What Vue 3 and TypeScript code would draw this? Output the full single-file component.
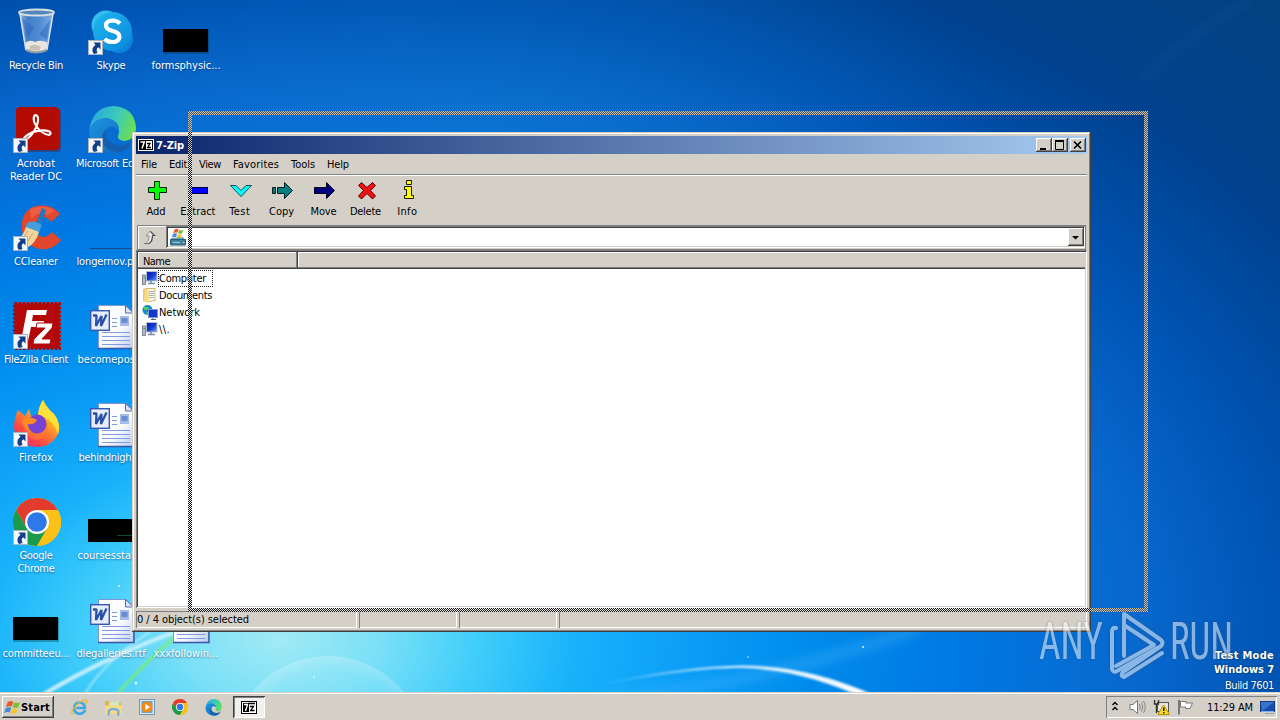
<script setup lang="ts">
import type { Directive } from 'vue'

interface DesktopItem {
  icon: string
  lines: { text: string; width: number }[]
  shortcut?: boolean
}

// Spreads a label's letters so that it fills the given width.
const vFit: Directive<HTMLElement, number> = {
  mounted(el, binding) {
    const count = (el.textContent ?? '').trim().length
    if (!count) return
    const natural = el.getBoundingClientRect().width
    el.style.letterSpacing = `${(binding.value - natural) / count}px`
  },
}

const one = (icon: string, text: string, width: number, shortcut = false): DesktopItem => ({
  icon,
  lines: [{ text, width }],
  shortcut,
})

const columns: DesktopItem[][] = [
  [
    one('bin', 'Recycle Bin', 54),
    { icon: 'acrobat', shortcut: true, lines: [{ text: 'Acrobat', width: 38 }, { text: 'Reader DC', width: 52 }] },
    one('ccleaner', 'CCleaner', 44, true),
    one('filezilla', 'FileZilla Client', 64, true),
    one('firefox', 'Firefox', 34, true),
    { icon: 'chrome', shortcut: true, lines: [{ text: 'Google', width: 33 }, { text: 'Chrome', width: 37 }] },
    one('black', 'committeeu...', 67),
  ],
  [
    one('skype', 'Skype', 29, true),
    one('edge', 'Microsoft Edge', 70, true),
    one('line', 'longernov.png', 69),
    one('word', 'becomepos...', 67),
    one('word', 'behindnight...', 65),
    one('blackline', 'coursesstat...', 67),
    one('word', 'diegalleries.rtf', 69),
  ],
  [
    one('black', 'formsphysic...', 69),
    one('', '', 0),
    one('', '', 0),
    one('', '', 0),
    one('', '', 0),
    one('', '', 0),
    one('word', 'xxxfollowin...', 65),
  ],
]

const menus = [
  { text: 'File', width: 16 },
  { text: 'Edit', width: 18 },
  { text: 'View', width: 22 },
  { text: 'Favorites', width: 46 },
  { text: 'Tools', width: 24 },
  { text: 'Help', width: 22 },
]

const tools = [
  { id: 'add', text: 'Add', width: 19 },
  { id: 'extract', text: 'Extract', width: 35 },
  { id: 'test', text: 'Test', width: 21 },
  { id: 'copy', text: 'Copy', width: 25 },
  { id: 'move', text: 'Move', width: 26 },
  { id: 'delete', text: 'Delete', width: 31 },
  { id: 'info', text: 'Info', width: 20 },
]

const rows = [
  { icon: 'pc', text: 'Computer', width: 47, focus: true },
  { icon: 'docs', text: 'Documents', width: 53, focus: false },
  { icon: 'net', text: 'Network', width: 41, focus: false },
  { icon: 'pc', text: '\\\\.', width: 11, focus: false },
]
</script>

<template>
  <div class="stage">
    <svg class="streaks" viewBox="0 0 1280 720" width="1280" height="720">
      <defs>
        <linearGradient id="arc" x1="600" x2="873" y1="0" y2="0" gradientUnits="userSpaceOnUse">
          <stop offset="0" stop-color="#fff" stop-opacity="0" />
          <stop offset=".5" stop-color="#fff" stop-opacity=".8" />
          <stop offset="1" stop-color="#fff" />
        </linearGradient>
        <linearGradient id="ray" x1="40" x2="180" y1="700" y2="630" gradientUnits="userSpaceOnUse">
          <stop offset="0" stop-color="#fff" stop-opacity=".75" />
          <stop offset="1" stop-color="#fff" stop-opacity=".55" />
        </linearGradient>
        <radialGradient id="bubble">
          <stop offset="0" stop-color="#fff" stop-opacity="0" />
          <stop offset=".85" stop-color="#fff" stop-opacity=".06" />
          <stop offset="1" stop-color="#fff" stop-opacity=".22" />
        </radialGradient>
        <filter id="soft"><feGaussianBlur stdDeviation="1" /></filter>
        <filter id="wide"><feGaussianBlur stdDeviation="5" /></filter>
      </defs>
      <circle cx="328" cy="754" r="98" fill="url(#bubble)" />
      <path d="M600 700Q760 685 920 628" stroke="#5cc0ff" stroke-width="12" fill="none" opacity=".25" filter="url(#wide)" />
      <path d="M560 694C640 673 700 666 742 665.500C795 666 838 679 878 697L862 697C830 683 790 669 742 668C700 668 640 676 560 694Z" fill="url(#arc)" filter="url(#soft)" />
      <path d="M44 694Q110 655 178 631" stroke="url(#ray)" stroke-width="4" fill="none" filter="url(#soft)" />
      <path d="M85 694Q105 660 150 632" stroke="#fff" stroke-width="2" fill="none" opacity=".5" filter="url(#soft)" />
      <path d="M117 694Q145 662 185 628" stroke="#76ee76" stroke-width="2.500" fill="none" filter="url(#soft)" />
      <path d="M1140 80Q1190 35 1250 0" stroke="#3f8bd0" stroke-width="8" fill="none" opacity=".08" filter="url(#wide)" />
      <g fill="#cff5ff"><circle cx="136" cy="683" r="1.500" /><circle cx="119" cy="586" r="1" /><circle cx="863" cy="647" r="1" /><circle cx="314" cy="677" r="1" /><circle cx="748" cy="657" r=".8" /></g>
    </svg>

    <svg width="0" height="0" class="defs">
      <defs>
        <linearGradient id="glass" x1="0" x2="1" y1="0" y2="0">
          <stop offset="0" stop-color="#b9d0ea" /><stop offset=".25" stop-color="#4f86cc" />
          <stop offset=".6" stop-color="#5f97da" /><stop offset="1" stop-color="#9fc0e8" />
        </linearGradient>
        <linearGradient id="sky" x1="0" x2="1" y1="0" y2="1">
          <stop offset="0" stop-color="#1fb8ee" /><stop offset="1" stop-color="#0a86dc" />
        </linearGradient>
        <linearGradient id="edgeTop" x1="0" x2="1" y1=".3" y2=".6">
          <stop offset="0" stop-color="#2aa8e2" /><stop offset=".55" stop-color="#3ccbb8" /><stop offset="1" stop-color="#6de04e" />
        </linearGradient>
        <linearGradient id="edgeBlue" x1="0" x2="1" y1="0" y2="1">
          <stop offset="0" stop-color="#1c94e0" /><stop offset="1" stop-color="#1165b4" />
        </linearGradient>
        <linearGradient id="flame" x1=".9" x2=".2" y1="0" y2="1">
          <stop offset="0" stop-color="#fff04c" /><stop offset=".4" stop-color="#ffa424" /><stop offset=".75" stop-color="#fb4a44" /><stop offset="1" stop-color="#e22b74" />
        </linearGradient>
        <linearGradient id="paper" x1="0" x2="1" y1="0" y2="1">
          <stop offset="0" stop-color="#fff" /><stop offset=".6" stop-color="#f8faff" /><stop offset="1" stop-color="#b9caf2" />
        </linearGradient>
        <linearGradient id="screen" x1="0" x2="1" y1="0" y2="1">
          <stop offset="0" stop-color="#0a1fa8" /><stop offset=".5" stop-color="#1238d0" /><stop offset="1" stop-color="#6ea8f0" />
        </linearGradient>

        <symbol id="bin" viewBox="0 0 48 48">
          <path d="M6 3L12 42Q24 48 34 42L41 3Z" fill="url(#glass)" opacity=".85" />
          <path d="M9 10L21 20L14 31ZM37 12L26 26L34 32Z" fill="#2d68bd" opacity=".55" />
          <path d="M12 35Q17 31 22 34Q28 31 35 35L33 43Q24 47 13 43Z" fill="#e9e6df" />
          <path d="M17 38Q22 35 28 39L26 43L16 42Z" fill="#c9c2b4" />
          <path d="M7 6L13 42M40 6L34 42" stroke="#d6e4f3" stroke-width="1.400" fill="none" />
          <path d="M13 42Q23 47 34 42" stroke="#8c98a5" stroke-width="2" fill="none" />
          <ellipse cx="23.500" cy="4.500" rx="17.500" ry="3" fill="#5486bd" stroke="#dadfe4" stroke-width="1.800" />
        </symbol>
        <symbol id="skype" viewBox="0 0 48 48">
          <circle cx="18" cy="17" r="14.500" fill="#35bdf1" /><circle cx="31" cy="31" r="14" fill="#0a84dc" />
          <circle cx="24.500" cy="23.500" r="19.500" fill="url(#sky)" />
          <path d="M32 15.500Q29 12.500 24.500 12.500Q18 12.700 18 17.500Q18 21.200 24 22.800Q31.500 24.500 31.500 29Q31 34 24.500 34Q19.500 34 16.500 31" fill="none" stroke="#fff" stroke-width="4.200" />
        </symbol>
        <symbol id="acrobat" viewBox="0 0 48 48">
          <rect x="4" y="3" width="44" height="43" rx="4" fill="#600" opacity=".35" />
          <rect x="3" y="1" width="43" height="43" rx="4" fill="#b30b00" />
          <path d="M13 33C18 32 26 19 25 12Q24 8 21.500 9.500Q19 14 24 21Q29 28 36 29Q39 28 36.500 25.500Q30 23 20 26Q11 30 10 34Q11 36 13 33" fill="none" stroke="#fff" stroke-width="2.100" />
        </symbol>
        <symbol id="edge" viewBox="0 0 48 48">
          <path d="M1 26Q4 1 25 0Q46 1 48 21Q48 33 37 35Q27 34 31 27Q31 15 20 13Q7 13 1 26Z" fill="url(#edgeTop)" />
          <path d="M1 24Q6 11 20 12Q31 15 31 24Q25 18 19 23Q13 29 19 37Q28 47 42 39Q34 49 22 47Q2 44 1 24Z" fill="url(#edgeBlue)" />
          <path d="M19 23Q15 35 29 39Q38 41 45 34Q38 48 27 46Q14 42 14 32Q14 26 19 23Z" fill="#155fae" />
        </symbol>
        <symbol id="ccleaner" viewBox="0 0 48 48">
          <path d="M47 10Q37 -2 20 3Q7 9 9 27Q14 47 34 45Q43 43 48 36L39 28Q31 37 24 30Q20 20 26 14Q33 11 38 18Z" fill="#e2462c" />
          <path d="M17 5Q31 -1 42 7L35 11Q25 7 18 15Z" fill="#f3664c" opacity=".7" />
          <path d="M29 4L33 6L28 22L23 20Z" fill="#2177c0" />
          <path d="M14 19Q20 15 29 21L26 28L12 25Z" fill="#429fda" />
          <path d="M13 23L26 28Q23 39 15 43L0 39Q9 35 13 23Z" fill="#f4d49a" />
          <path d="M15 27L7 38M20 29L13 40" stroke="#d5a55f" stroke-width="1" />
        </symbol>
        <symbol id="filezilla" viewBox="0 0 48 48">
          <rect x="1.500" y="1.500" width="45" height="45" fill="#b00707" stroke="#b00707" stroke-width="3" stroke-dasharray="2.500 1.500" />
          <rect x="2" y="2" width="44" height="44" fill="#b20808" />
          <path d="M14 8H34L33 13H20L19 19H31L30 25H18L15 39H8Z" fill="#fff" />
          <path d="M24 21H40L39 26L29 37H38L37 42H20L21 37L32 26H23Z" fill="#fff" stroke="#b20808" stroke-width="1" />
        </symbol>
        <symbol id="firefox" viewBox="0 0 48 48">
          <path d="M5 10L12 16L16 9L18 16L25 15Q26 6 30 0Q33 8 41 14Q49 25 45 34Q38 47 24 47Q5 46 1 29Q1 18 5 10Z" fill="url(#flame)" />
          <path d="M30 0Q34 8 41 14Q48 23 45 34Q42 24 34 19Q27 15 25 14Q26 6 30 0Z" fill="#ffdf3a" />
          <path d="M11 24Q16 20 27 22Q23 28 17 26Q20 33 28 32Q35 31 34 22Q37 28 33 36Q22 44 14 35Q10 30 11 24Z" fill="#ff7b30" opacity=".6" />
          <circle cx="24" cy="24" r="9.500" fill="#7642d2" />
          <path d="M9 20Q17 15 24 20Q22 25 15 24Q15 30 20 33Q10 30 9 20Z" fill="#ff8b25" />
        </symbol>
        <symbol id="chrome" viewBox="0 0 48 48">
          <circle cx="24" cy="24" r="24" fill="#fbc116" />
          <path d="M24 12H44.800A24 24 0 0 0 3.200 12L13.600 30Z" fill="#e33b2e" />
          <path d="M3.200 12A24 24 0 0 0 24 48L34.400 30H24L13.600 30Z" fill="#1a9a4c" />
          <path d="M24 12H44.800A24 24 0 0 1 24 48L34.400 30Z" fill="#fbc116" />
          <circle cx="24" cy="24" r="12" fill="#fff" /><circle cx="24" cy="24" r="9.800" fill="#2e78ea" />
        </symbol>
        <symbol id="word" viewBox="0 0 48 48">
          <path d="M10.500 3.500H38L45.500 11V46.500H10.500Z" fill="url(#paper)" stroke="#7f97d6" />
          <path d="M37.500 3.500V11H45.500Z" fill="#dbe4fa" stroke="#4f6cb5" />
          <path d="M46 11V46.500H10" fill="none" stroke="#3a55a2" stroke-width="1.400" />
          <path d="M24 16.500H29M24 20.500H29M24 24.500H29M14 30.500H42M14 34.500H42M14 38.500H42M14 42.500H42" stroke="#8299da" />
          <rect x="32" y="14" width="9" height="10" fill="#a4bbea" /><rect x="33.500" y="16" width="6" height="5" fill="#6a8dd0" />
          <rect x="2.700" y="8.700" width="18.600" height="19.600" fill="#e6edfb" stroke="#3459ae" stroke-width="1.400" />
          <path d="M5 13.500H8.500L8 24L13.500 14L13 24L18.500 12.500" fill="none" stroke="#2b50a8" stroke-width="2.300" stroke-linejoin="bevel" />
        </symbol>
        <symbol id="black" viewBox="0 0 48 48"><rect x="0" y="22" width="46" height="24" fill="#033" opacity=".35" /><rect x="0" y="21" width="45" height="23" fill="#000" /></symbol>
        <symbol id="blackline" viewBox="0 0 48 48"><rect x="0" y="21" width="48" height="23" fill="#000" /><path d="M29 37.500H44" stroke="#064f32" /></symbol>
        <symbol id="line" viewBox="0 0 48 48"><path d="M2 44.500H48" stroke="#1b4a83" /></symbol>
        <symbol id="shortcut" viewBox="0 0 16 16">
          <rect x=".5" y=".5" width="14" height="14" fill="#f5f8fb" stroke="#aab4c0" />
          <path d="M5.500 2.500H12.500V9.500L10.300 7.300Q7.500 9 9.500 13L6 14Q2 9 7.500 4.700Z" fill="#123f88" />
        </symbol>

        <symbol id="add" viewBox="0 0 24 24"><path d="M9.500 3.500H14.500V9.500H21.500V14.500H14.500V21.500H9.500V14.500H3.500V9.500H9.500Z" fill="#0f0" stroke="#002200" /></symbol>
        <symbol id="extract" viewBox="0 0 24 24"><rect x="3.500" y="9.500" width="17" height="6" fill="#00f" stroke="#000044" /></symbol>
        <symbol id="test" viewBox="0 0 24 24"><path d="M1.500 7.500H7L12 12.500L17 7.500H22.500L12 18.500Z" fill="#0ff" stroke="#045558" /></symbol>
        <symbol id="copy" viewBox="0 0 24 24"><path d="M1.500 9.500H4.500V15.500H1.500ZM6.500 9.500H13.500V4.500L21.500 12.500L13.500 20.500V15.500H6.500Z" fill="#008080" stroke="#001c1e" /></symbol>
        <symbol id="move" viewBox="0 0 24 24"><path d="M1.500 9.500H13.500V4.500L21.500 12.500L13.500 20.500V15.500H1.500Z" fill="#000080" stroke="#000018" /></symbol>
        <symbol id="delete" viewBox="0 0 24 24"><path d="M3.500 7.500L6.500 4.500L12 9.500L17.500 4.500L20.500 7.500L15.500 12.500L20.500 18L17.500 21L12 15.500L6.500 21L3.500 18L8.500 12.500Z" fill="#f00f0f" stroke="#500" /></symbol>
        <symbol id="info" viewBox="0 0 24 24"><path d="M9.500 2.500H14.500V6.500H9.500ZM7.500 8.500H14.500V17.500H16.500V20.500H7.500V17.500H9.500V11.500H7.500Z" fill="#ff0" stroke="#1c1a00" /></symbol>

        <symbol id="seven" viewBox="0 0 16 12">
          <rect x="0" y="0" width="16" height="12" fill="#fff" /><rect x="1" y="1" width="14" height="10" fill="#000" /><rect x="8" y="2" width="6" height="8" fill="#fff" />
          <path d="M2.500 3H6.300L4 9.500" stroke="#fff" stroke-width="1.500" fill="none" /><path d="M9 4.500H12L9.700 8.500H13" stroke="#000" stroke-width="1.300" fill="none" />
        </symbol>
        <symbol id="pc" viewBox="0 0 16 16">
          <rect x=".5" y="4" width="3" height="9.500" fill="#b8bec8" stroke="#687080" stroke-width=".8" /><path d="M1.500 6.500H3" stroke="#38ae4c" />
          <rect x="4.500" y=".5" width="10.500" height="9.500" fill="url(#screen)" stroke="#b5bdd0" /><path d="M9 10V12M6 12.500H13" stroke="#7f8aa6" stroke-width="1.500" />
        </symbol>
        <symbol id="docs" viewBox="0 0 16 16">
          <path d="M1 1L5 0V14L1 13Z" fill="#e7c766" /><path d="M4.500 .5H13V12.500L4.500 14Z" fill="#fffbe8" stroke="#c7a54a" stroke-width=".8" />
          <path d="M7 3.500H12M7 5.500H12M7 7.500H12M7 9.500H12" stroke="#7da1c8" stroke-width=".8" /><path d="M3 1L7 3V14.500L2 13Z" fill="#f5dd8b" />
        </symbol>
        <symbol id="net" viewBox="0 0 16 16">
          <circle cx="5.500" cy="5" r="5" fill="#1587ca" /><path d="M2 2Q6 1 7 3L5 5L2 5ZM4 7L8 7L6 10Z" fill="#4cce68" />
          <rect x="6.500" y="4.500" width="9" height="8" fill="#1238c8" stroke="#8298d0" /><path d="M11 13V14.500M9 14.500H14" stroke="#4a5b90" />
        </symbol>
        <symbol id="flag" viewBox="0 0 18 16">
          <path d="M4 2Q7 0 10 2L8 7Q5 6 2 7.500Z" fill="#ea5a28" /><path d="M11 2.500Q14 4 17 2.500L15 8Q12 9 9 7.500Z" fill="#80bd37" />
          <path d="M1.800 8.500Q5 7 7.600 8.200L6 13.500Q3 12 0 14Z" fill="#3f8cd9" /><path d="M8.700 8.700Q11.500 10 14.500 9L13 14Q9.800 15.500 7 14Z" fill="#f9c52c" />
        </symbol>
        <symbol id="ie" viewBox="0 0 16 16">
          <path d="M13.300 10.500Q11.500 14 8 14Q2.800 13.500 3 8.300Q3.500 3.500 8 3.300Q13 3.500 13 8.500H5" fill="none" stroke="#3da9e6" stroke-width="2.500" />
          <path d="M1.500 14.500Q-1 12 5 6Q11 0 14.500 1.300Q16 2.500 13.500 5.500" fill="none" stroke="#ebb92d" stroke-width="1.300" />
        </symbol>
        <symbol id="folder" viewBox="0 0 16 16">
          <path d="M0 2H5L6 3.500H15V12H0Z" fill="#dfb345" /><path d="M4 2.500H13V7H4Z" fill="#cfe9c0" /><path d="M0 6H16V14H0Z" fill="#f6da83" />
          <path d="M3.500 15.500V11Q8 7.500 12.500 11V15.500" fill="none" stroke="#6fb2e0" stroke-width="2.200" />
        </symbol>
        <symbol id="player" viewBox="0 0 16 16">
          <rect x=".5" y=".5" width="15" height="15" fill="#d5e8f6" stroke="#7596b3" /><rect x="2.500" y="2" width="11" height="12" fill="#6aa3d3" />
          <circle cx="8" cy="8" r="5.500" fill="#f28a15" /><path d="M6.300 4.800L11 8L6.300 11.200Z" fill="#fff" />
        </symbol>
        <symbol id="up" viewBox="0 0 16 16">
          <path d="M3.500 14.500Q8 14 8 7H5L9 2L13.500 6.500H11.500Q12 14 7 15Z" fill="#e8e8e8" stroke="#909090" /><path d="M9.500 2.500L13.500 6.500H11.500Q11.500 12 8 14.500" fill="none" stroke="#505050" stroke-width="1.200" /><path d="M3 14.500H8" stroke="#777" />
        </symbol>
        <symbol id="mycomputer" viewBox="0 0 18 18">
          <use href="#flag" x="2" y="0" width="14" height="11" /><path d="M2 10L14 9L17 14V17H2Z" fill="#7aa6b6" /><path d="M1.500 11.500H16.500V17H1.500Z" fill="#45839c" stroke="#285d78" />
          <path d="M4 14.500H11" stroke="#93d0d7" /><path d="M14 14.500H15.500" stroke="#fbdc58" />
        </symbol>
      </defs>
    </svg>

    <div class="desktop">
      <div v-for="(col, ci) in columns" :key="ci" class="column">
        <div v-for="(item, ri) in col" :key="ri" class="shortcut">
          <div class="picture">
            <svg v-if="item.icon" width="48" height="48"><use :href="'#' + item.icon" /></svg>
            <svg v-if="item.shortcut" class="badge" width="16" height="16"><use href="#shortcut" /></svg>
          </div>
          <div v-for="line in item.lines" :key="line.text" class="caption"><span v-fit="line.width">{{ line.text }}</span></div>
        </div>
      </div>
    </div>

    <div class="dragframe over-desktop" />

    <section class="window">
      <header class="title">
        <svg width="16" height="12"><use href="#seven" /></svg>
        <b><span v-fit="28">7-Zip</span></b>
        <div class="controls">
          <i><svg width="12" height="10"><path d="M2 9H8" stroke="#000" stroke-width="2" /></svg></i>
          <i><svg width="12" height="10"><path d="M1.500 1V9.500H9.500V1" stroke="#000" fill="none" /><path d="M1 1H10" stroke="#000" stroke-width="2" /></svg></i>
          <i class="close"><svg width="12" height="10"><path d="M2 1.500L9 8.500M9 1.500L2 8.500" stroke="#000" stroke-width="1.700" /></svg></i>
        </div>
      </header>
      <nav class="menu"><span v-for="m in menus" :key="m.text" v-fit="m.width">{{ m.text }}</span></nav>
      <div class="toolbar">
        <div v-for="t in tools" :key="t.id" class="tool">
          <svg width="24" height="24"><use :href="'#' + t.id" /></svg>
          <div><span v-fit="t.width">{{ t.text }}</span></div>
        </div>
      </div>
      <div class="address">
        <div class="up"><svg width="16" height="16"><use href="#up" /></svg></div>
        <div class="combo">
          <svg width="18" height="18"><use href="#mycomputer" /></svg>
          <i><svg width="9" height="6"><path d="M1 1H8L4.500 4.500Z" fill="#000" /></svg></i>
        </div>
      </div>
      <div class="list">
        <div class="heading"><div class="name"><span v-fit="27">Name</span></div><div class="rest" /></div>
        <div v-for="r in rows" :key="r.text" class="row">
          <svg width="16" height="16"><use :href="'#' + r.icon" /></svg>
          <div class="label" :class="{ focus: r.focus }"><span v-fit="r.width">{{ r.text }}</span></div>
        </div>
      </div>
      <footer class="status">
        <div class="pane first"><span v-fit="112">0 / 4 object(s) selected</span></div>
        <div class="pane" /><div class="pane" /><div class="pane last" />
      </footer>
      <div class="dragframe over-window" />
    </section>

    <svg class="watermark" width="200" height="72" viewBox="0 0 200 72">
      <g fill="#fff">
        <text x="3" y="51" font-size="51" textLength="64" lengthAdjust="spacingAndGlyphs">ANY</text>
        <text x="134" y="51" font-size="51" textLength="63" lengthAdjust="spacingAndGlyphs">RUN</text>
      </g>
      <g fill="none" stroke="#fff" stroke-width="4" stroke-linejoin="round" stroke-linecap="round">
        <path d="M80 20Q76 19 76 24V61Q77 65 81 63L121 40" /><path d="M88 48V6L125 32Q128 35 125 38L87 64Q84 68 88 69L126 45" /><path d="M88 17L118 37L80 58" />
      </g>
    </svg>

    <div class="build">
      <b><span v-fit="59">Test Mode</span></b><b><span v-fit="60">Windows 7</span></b><div><span v-fit="49">Build 7601</span></div>
    </div>

    <div class="taskbar">
      <div class="start"><svg width="17" height="15"><use href="#flag" /></svg><b><span v-fit="29">Start</span></b></div>
      <div class="quick">
        <svg width="17" height="17"><use href="#ie" /></svg>
        <svg width="17" height="17"><use href="#folder" /></svg>
        <svg width="16" height="16"><use href="#player" /></svg>
        <svg width="16" height="16"><use href="#chrome" /></svg>
        <svg width="17" height="17"><use href="#edge" /></svg>
      </div>
      <div class="active">
        <svg width="16" height="13" viewBox="0 0 16 13">
          <rect x=".5" y=".5" width="15" height="12" fill="#fff" stroke="#000" /><rect x="2" y="2" width="6" height="9" fill="#000" />
          <path d="M3 3.500H6.500L4.500 10" stroke="#fff" stroke-width="1.400" fill="none" /><path d="M7 2.500H14M9 5.500H12.500L9.700 9.500H13.500" stroke="#000" stroke-width="1.300" fill="none" />
        </svg>
      </div>
      <div class="tray">
        <svg class="chev" width="8" height="12"><path d="M1.500 4L4 1.500L6.500 4M1.500 9L4 6.500L6.500 9" fill="none" stroke="#000" stroke-width="1.400" /></svg>
        <svg class="vol" width="17" height="16"><path d="M1 5.500H4L8.500 1.500V14.500L4 10.500H1Z" fill="#fff" stroke="#777" /><path d="M10.500 5Q12 8 10.500 11M12.500 3.500Q15 8 12.500 12.500M14.500 2Q18 8 14.500 14" fill="none" stroke="#888" /></svg>
        <svg class="lan" width="17" height="16"><rect x="4.500" y="3.500" width="11" height="9" fill="#e8e4d8" stroke="#555" /><path d="M1.500 1V5H5.500V1M3.500 5V14" fill="none" stroke="#333" stroke-width="1.400" /><path d="M10.500 6L16.500 15.500H5Z" fill="#f9dc28" stroke="#b79200" /><path d="M10.800 8.500V12M10.800 13V14.500" stroke="#000" stroke-width="1.300" /></svg>
        <svg class="action" width="17" height="16"><path d="M2 1V15.500" stroke="#777" stroke-width="2" /><path d="M3.500 2.500H9V4H15.500L13 9.500H8.500V8H3.500Z" fill="#fff" stroke="#777" /></svg>
        <time><span v-fit="46">11:29 AM</span></time>
        <svg class="show" width="15" height="13"><rect x=".5" y=".5" width="14" height="10" fill="#174fae" stroke="#153c82" /><path d="M1 1H14L2 10Z" fill="#4f91de" opacity=".6" /><path d="M1 10.500H14" stroke="#7fb2e5" /><path d="M5 12.500H14" stroke="#8fa4bc" /></svg>
      </div>
    </div>
  </div>
</template>

<style>
html, body { margin: 0; overflow: hidden; }
</style>

<style scoped>
.stage {
  position: relative; width: 1280px; height: 720px; overflow: hidden;
  font: 11px/13px "DejaVu Sans Condensed", "DejaVu Sans", sans-serif; font-stretch: condensed; color: #000;
  background:
    radial-gradient(ellipse 460px 190px at 520px 110px, rgba(20, 135, 210, .28), rgba(20, 135, 210, 0)),
    radial-gradient(ellipse 1100px 700px at 280px 640px,
    #a0eaf5 0, #7be0f7 9%, #40cdfa 18%, #18b2fb 27%, #0a9cf6 38%, #008cec 48%, #0078e2 62%, #0868cd 78%, #0054b4 91%, #00428f 108%, #04427f 130%);
}
.stage svg { display: block; flex: none; }
.stage span { display: inline-block; white-space: pre; }
.streaks, .defs { position: absolute; left: 0; top: 0; }
.desktop { position: absolute; left: -1px; top: 8px; display: flex; }
.column { width: 75px; }
.shortcut { height: 98px; display: flex; flex-direction: column; align-items: center; }
.picture { position: relative; width: 48px; height: 48px; margin-bottom: 3px; }
.badge { position: absolute; left: 0; bottom: 0; }
.caption { color: #fff; height: 13px; margin-left: -1px; text-shadow: 0 1px 2px rgba(0, 20, 70, .5); }

.window {
  position: absolute; left: 132px; top: 132px; width: 959px; height: 500px; box-sizing: border-box; padding: 4px; overflow: hidden;
  display: flex; flex-direction: column; background: #d4d0c8;
  box-shadow: inset -1px -1px #404040, inset 1px 1px #d4d0c8, inset -2px -2px #808080, inset 2px 2px #fff;
}
.title { height: 18px; flex: none; display: flex; align-items: center; gap: 2px; padding: 0 1px 0 2px; color: #fff; background: linear-gradient(90deg, #0a246a, #a6caf0); }
.controls { display: flex; margin-left: auto; }
.controls i, .combo i {
  width: 16px; height: 14px; box-sizing: border-box; padding: 2px; background: #d4d0c8;
  box-shadow: inset -1px -1px #404040, inset 1px 1px #fff, inset -2px -2px #808080;
}
.controls .close { margin-left: 2px; }
.menu { height: 21px; flex: none; box-sizing: border-box; padding: 4px 0 0 5px; margin-bottom: 1px; display: flex; gap: 12px; border-bottom: 1px solid #808080; box-shadow: 0 1px #fff; }
.toolbar { height: 49px; flex: none; display: flex; padding-top: 2px; box-sizing: border-box; margin-left: -1px; }
.tool { width: 41.9px; display: flex; flex-direction: column; align-items: center; }
.tool svg { margin-left: 3px; margin-bottom: 3px; }
.address { height: 25px; flex: none; box-sizing: border-box; display: flex; margin: 0 1px 0 1px; border: 1px solid #808080; box-shadow: inset 1px 1px #fff; }
.up { width: 28px; padding: 3px 0 0 3px; box-sizing: border-box; }
.combo {
  flex: 1; display: flex; align-items: center; justify-content: space-between; height: 22px; box-sizing: border-box; padding: 2px 1px 2px 3px; background: #fff;
  box-shadow: inset 1px 1px #808080, inset -1px -1px #fff, inset 2px 2px #404040, inset -2px -2px #d4d0c8;
}
.combo i { width: 16px; height: 18px; padding: 7px 0 0 3px; }
.list { flex: 1; padding: 2px; background: #fff; box-shadow: inset 1px 1px #808080, inset -1px -1px #fff, inset 2px 2px #404040, inset -2px -2px #d4d0c8; }
.heading { height: 17px; display: flex; background: #d4d0c8; margin-bottom: 1px; }
.name { width: 160px; box-sizing: border-box; padding: 3px 0 0 5px; box-shadow: inset -1px -1px #404040, inset -2px -2px #808080, inset 1px 1px #fff; }
.rest { flex: 1; box-shadow: inset 0 -1px #404040, inset 0 -2px #808080, inset 1px 1px #fff; }
.row { height: 17px; display: flex; align-items: center; padding-left: 4px; }
.label { height: 17px; line-height: 17px; padding: 0 2px 0 1px; }
.focus { padding-right: 7px; outline: 1px dotted #222; outline-offset: -1px; }
.status { height: 17px; flex: none; display: flex; gap: 2px; margin-top: 3px; }
.pane { width: 98px; box-sizing: border-box; box-shadow: inset 1px 1px #808080, inset -1px -1px #fff; }
.first { width: 221px; padding: 2px 0 0 1px; }
.last { flex: 1; }
.dragframe {
  position: absolute; width: 960px; height: 501px;
  clip-path: polygon(evenodd, 0 0, 100% 0, 100% 100%, 0 100%, 0 0, 4px 4px, 956px 4px, 956px 497px, 4px 497px, 4px 4px);
}
.over-desktop { left: 188px; top: 111px; background: repeating-conic-gradient(#cabda8 0 25%, #48566a 0 50%) 0 0 / 2px 2px; }
.over-window { left: 56px; top: -21px; background: repeating-conic-gradient(rgba(255, 255, 255, .7) 0 25%, #111 0 50%) 0 0 / 2px 2px; }
.watermark { position: absolute; left: 1036px; top: 608px; opacity: .52; font-family: Roboto, "Open Sans", sans-serif; font-weight: 400; filter: drop-shadow(0 0 1px #345); }
.build { position: absolute; right: 6px; top: 649px; display: flex; flex-direction: column; align-items: flex-end; color: #fff; text-shadow: 0 0 2px #024; }
.build b { height: 14px; }
.build div { margin-top: 2px; }
.taskbar { position: absolute; left: 0; top: 692px; width: 1280px; height: 28px; box-sizing: border-box; display: flex; align-items: center; background: #d4d0c8; box-shadow: inset 0 1px #d4d0c8, inset 0 2px #fff; padding: 4px 3px 2px 2px; }
.start { width: 52px; height: 22px; box-sizing: border-box; display: flex; align-items: center; padding-left: 2px; box-shadow: inset -1px -1px #404040, inset 1px 1px #fff, inset -2px -2px #808080; }
.quick { display: flex; align-items: center; gap: 17px; margin-left: 17px; width: 162px; }
.active { width: 32px; height: 22px; box-sizing: border-box; padding: 5px 0 0 8px; background: #f2f0ec; box-shadow: inset 1px 1px #404040, inset -1px -1px #fff, inset 2px 2px #808080; }
.tray { margin-left: auto; width: 171px; height: 22px; box-sizing: border-box; display: flex; align-items: center; padding-left: 5px; box-shadow: inset 1px 1px #808080, inset -1px -1px #fff; }
.vol { margin-left: 10px; }
.lan { margin-left: 7px; }
.action { margin-left: 7px; }
.tray time { margin-left: 13px; }
.show { margin-left: 7px; }
</style>
